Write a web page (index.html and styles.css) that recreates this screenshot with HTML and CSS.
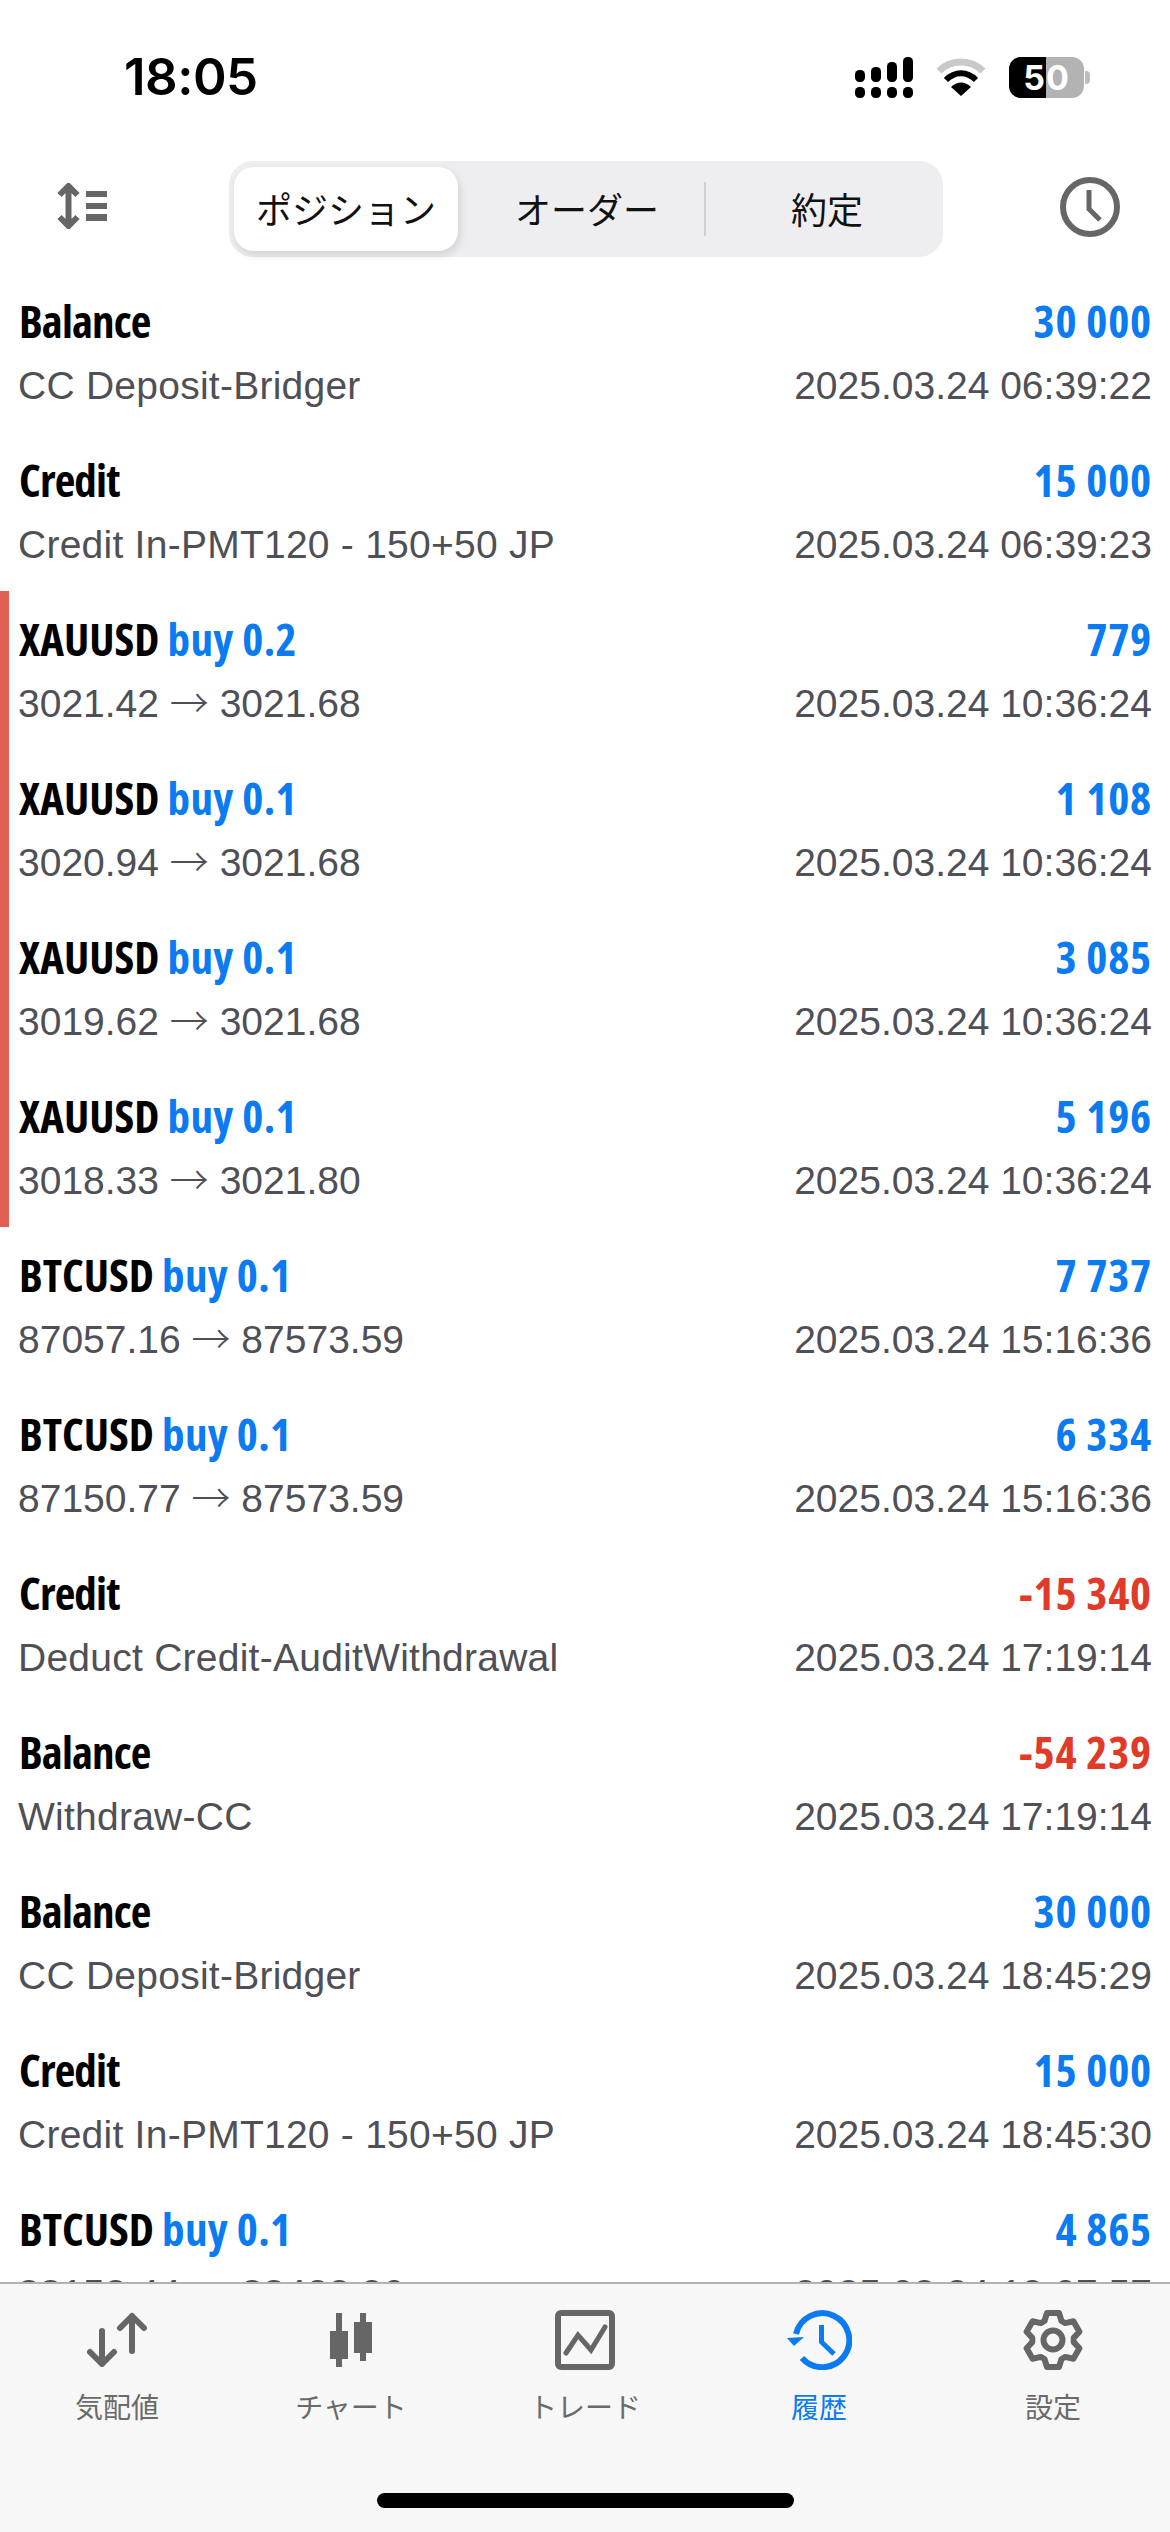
FILE: index.html
```html
<!DOCTYPE html>
<html lang="ja">

<head>
    <meta charset="UTF-8">
    <meta name="viewport" content="width=device-width, initial-scale=1.0">
    <title>履歴</title>
    <link rel="stylesheet" href="styles.css">
</head>

<body>
    <div class="status">
        <span class="time">18:05</span>
        <div class="status-icons">
            <svg width="58" height="41" viewBox="0 0 58 41" fill="#000">
                <rect x="0" y="13" width="10" height="12" rx="4.500"/><rect x="0" y="30" width="10" height="11" rx="4.500"/>
                <rect x="16" y="10" width="10" height="15" rx="4.500"/><rect x="16" y="30" width="10" height="11" rx="4.500"/>
                <rect x="32" y="5" width="10" height="20" rx="4.500"/><rect x="32" y="30" width="10" height="11" rx="4.500"/>
                <rect x="48" y="0" width="10" height="25" rx="4.500"/><rect x="48" y="30" width="10" height="11" rx="4.500"/>
            </svg>
            <svg class="wifi" width="50" height="38" viewBox="0 0 50 38" fill="none">
                <path d="M3 13 C15 1 35 1 47 13" stroke="#c9c9c9" stroke-width="7"/>
                <path d="M10 22 C19 13 31 13 40 22" stroke="#000" stroke-width="6"/>
                <path d="M15 29 C21 23 29 23 35 29 L25 38 Z" fill="#000"/>
            </svg>
            <div class="battery"><span class="batt-num">50</span><i class="batt-nub"></i></div>
        </div>
    </div>

    <div class="toolbar">
        <svg class="tool-sort" width="52" height="46" viewBox="0 0 52 46" fill="#666">
            <path d="M12.500 3 V43 M3.500 12 L12.500 3 L21.500 12 M3.500 34 L12.500 43 L21.500 34" fill="none" stroke="#666" stroke-width="6"/>
            <rect x="30" y="8" width="21" height="6"/><rect x="30" y="20" width="21" height="6"/><rect x="30" y="31" width="21" height="7"/>
        </svg>
        <div class="segment">
            <div class="seg seg-on">ポジション</div>
            <div class="seg seg-mid">オーダー</div>
            <div class="seg seg-last">約定</div>
        </div>
        <svg class="tool-clock" width="60" height="60" viewBox="0 0 60 60" fill="none" stroke="#666">
            <circle cx="30" cy="30" r="27" stroke-width="6"/>
            <path d="M29 13 V32 L40 43" stroke-width="5"/>
        </svg>
    </div>

    <div class="list" id="list"></div>

    <div class="tabbar">
        <div class="tabs">
            <div class="tab">
                <svg class="tab-icon" width="60" height="60" viewBox="0 0 60 60" fill="none" stroke="#666" stroke-width="6" stroke-linecap="round" stroke-linejoin="round">
                    <path d="M45 6 V41 M33 18 L45 6 L57 18"/>
                    <path d="M15 21 V54 M3 42 L15 54 L27 42"/>
                </svg>
                <span>気配値</span>
            </div>
            <div class="tab">
                <svg class="tab-icon" width="42" height="60" viewBox="0 -3 42 60" fill="#666">
                    <rect x="6" y="0" width="6" height="54"/><rect x="0" y="18" width="18" height="28"/>
                    <rect x="30" y="0" width="6" height="48"/><path fill-rule="evenodd" d="M24 9 H42 V40 H24 Z M30 14 V34 H36 V14 Z"/>
                </svg>
                <span>チャート</span>
            </div>
            <div class="tab">
                <svg class="tab-icon" width="60" height="60" viewBox="0 0 60 60" fill="none" stroke="#666">
                    <rect x="3" y="3" width="54" height="54" rx="3" stroke-width="6"/>
                    <path d="M11 43 L23 25 L36 40 L50 17" stroke-width="5" stroke-linecap="round"/>
                </svg>
                <span>トレード</span>
            </div>
            <div class="tab tab-on">
                <svg class="tab-icon" width="65" height="60" viewBox="0 0 65 60" fill="none" stroke="#0a7bf0">
                    <path d="M9 24 A27 27 0 1 1 15 48" stroke-width="6"/>
                    <path d="M34.500 15 V32 L47 44" stroke-width="5"/>
                    <path d="M0 28 L17 27 L7 36 Z" fill="#0a7bf0" stroke="none"/>
                </svg>
                <span>履歴</span>
            </div>
            <div class="tab">
                <svg class="tab-icon" width="60" height="60" viewBox="0 0 60 60" fill="none" stroke="#666" stroke-width="6" stroke-linejoin="round">
                    <path d="M24 3 H36 L38.500 11 L42.200 13.100 L50.400 11.300 L56.400 21.700 L50.700 27.900 V32.100 L56.400 38.300 L50.400 48.700 L42.200 46.900 L38.500 49 L36 57 H24 L21.500 49 L17.800 46.900 L9.600 48.700 L3.600 38.300 L9.300 32.100 V27.900 L3.600 21.700 L9.600 11.300 L17.800 13.100 L21.500 11 Z"/>
                    <circle cx="30" cy="30" r="9.500"/>
                </svg>
                <span>設定</span>
            </div>
        </div>
        <div class="home-bar"></div>
    </div>

    <script>
        var rows = [
            ["Balance", "", "30 000", "CC Deposit-Bridger", "2025.03.24 06:39:22"],
            ["Credit", "", "15 000", "Credit In-PMT120 - 150+50 JP", "2025.03.24 06:39:23"],
            ["XAUUSD", "buy 0.2", "779", "3021.42 → 3021.68", "2025.03.24 10:36:24", 1],
            ["XAUUSD", "buy 0.1", "1 108", "3020.94 → 3021.68", "2025.03.24 10:36:24", 1],
            ["XAUUSD", "buy 0.1", "3 085", "3019.62 → 3021.68", "2025.03.24 10:36:24", 1],
            ["XAUUSD", "buy 0.1", "5 196", "3018.33 → 3021.80", "2025.03.24 10:36:24", 1],
            ["BTCUSD", "buy 0.1", "7 737", "87057.16 → 87573.59", "2025.03.24 15:16:36"],
            ["BTCUSD", "buy 0.1", "6 334", "87150.77 → 87573.59", "2025.03.24 15:16:36"],
            ["Credit", "", "-15 340", "Deduct Credit-AuditWithdrawal", "2025.03.24 17:19:14"],
            ["Balance", "", "-54 239", "Withdraw-CC", "2025.03.24 17:19:14"],
            ["Balance", "", "30 000", "CC Deposit-Bridger", "2025.03.24 18:45:29"],
            ["Credit", "", "15 000", "Credit In-PMT120 - 150+50 JP", "2025.03.24 18:45:30"],
            ["BTCUSD", "buy 0.1", "4 865", "88153.44 → 88422.26", "2025.03.24 19:07:57"]
        ];
        var html = '';
        for (var i = 0; i < rows.length; i++) {
            var r = rows[i];
            html += '<div class="row' + (r[1] ? ' row-trade' : '') + (r[5] ? ' row-mark' : '') + '">';
            html += '<div class="line"><span class="name">' + r[0] + (r[1] ? ' <span class="side">' + r[1] + '</span>' : '') + '</span>';
            html += '<span class="amount' + (r[2][0] === '-' ? ' neg' : '') + '">' + r[2] + '</span></div>';
            html += '<div class="line sub"><span class="comment">' + r[3].replace('→', '<span class="arrow">→</span>') + '</span><span>' + r[4] + '</span></div></div>';
        }
        document.getElementById('list').innerHTML = html;
    </script>
</body>

</html>
```
FILE: styles.css
```css
* {
    box-sizing: border-box;
}

html,
body {
    margin: 0;
    padding: 0;
}

body {
    width: 1170px;
    height: 2532px;
    overflow: hidden;
    background: #fff;
    display: flex;
    flex-direction: column;
    font-family: "Liberation Sans", Arial, "Noto Sans CJK JP", sans-serif;
}

.status {
    height: 130px;
    flex: none;
    display: flex;
    justify-content: space-between;
    align-items: flex-start;
    padding: 47px 86px 0 124px;
}

.time {
    font-size: 51px;
    line-height: 60px;
    font-weight: 600;
    font-family: Inter, "Liberation Sans", sans-serif;
    letter-spacing: -.5px;
}

.status-icons {
    display: flex;
    align-items: flex-start;
    gap: 23px;
    padding-top: 10px;
}

.wifi {
    margin-top: 1px;
}

.battery {
    width: 75px;
    height: 41px;
    border-radius: 12px;
    background: linear-gradient(to right, #000 50%, #b3b3b3 50%);
    position: relative;
    color: #fff;
    text-align: center;
    font-family: Inter, sans-serif;
    font-size: 34px;
    line-height: 41px;
    font-weight: 700;
    letter-spacing: 1px;
}

.batt-nub {
    position: absolute;
    right: -6px;
    top: 14px;
    width: 5px;
    height: 13px;
    border-radius: 0 4px 4px 0;
    background: #bdbdbd;
}

.toolbar {
    height: 143px;
    flex: none;
    display: flex;
    align-items: flex-start;
    justify-content: space-between;
    padding: 31px 50px 0 56px;
}

.tool-sort {
    margin-top: 22px;
}

.tool-clock {
    margin-top: 16px;
}

.segment {
    width: 714px;
    height: 96px;
    background: #eeeef0;
    border-radius: 24px;
    padding: 6px 5px;
    display: flex;
    align-items: center;
    font-size: 36px;
    font-family: "Noto Sans CJK JP", sans-serif;
    color: #111;
    margin-left: 4px;
}

.seg {
    height: 84px;
    display: flex;
    align-items: center;
    justify-content: center;
    padding-bottom: 3px;
}

.seg-on {
    width: 224px;
    background: #fff;
    border-radius: 20px;
    box-shadow: 2px 4px 8px rgba(0, 0, 0, .12);
}

.seg-mid {
    width: 248px;
    position: relative;
    padding-left: 10px;
}

.seg-mid::after {
    content: "";
    position: absolute;
    right: 0;
    top: 15px;
    height: 54px;
    width: 2px;
    background: #d0d0d4;
}

.seg-last {
    width: 232px;
    padding-left: 10px;
}

.list {
    flex: 1;
    overflow: hidden;
}

.row {
    height: 159px;
    padding: 18px 18px 0 19px;
}

.row-mark {
    box-shadow: inset 9px 0 0 #e05f55;
}

.line {
    display: flex;
    justify-content: space-between;
    align-items: baseline;
}

.name,
.amount {
    font-family: "Open Sans", "Liberation Sans", sans-serif;
    font-stretch: 75%;
    font-weight: 700;
    font-size: 45px;
    line-height: 60px;
}

.name {
    color: #000;
    letter-spacing: -.85px;
}

.row-trade .name {
    letter-spacing: 0;
}

.side,
.amount {
    color: #0a7bf0;
}

.side {
    letter-spacing: .4px;
}

.amount {
    letter-spacing: .8px;
}

.amount.neg {
    color: #e23a28;
}

.sub {
    font-size: 39px;
    line-height: 42px;
    color: #4f5056;
    margin-top: 2px;
    padding-top: 12px;
}

.comment {
    letter-spacing: .25px;
    margin-left: -1px;
}

.row-trade .comment {
    letter-spacing: 0;
}

.arrow {
    font-family: "Noto Sans CJK JP", sans-serif;
    font-weight: 300;
    line-height: 0;
}

.tabbar {
    height: 250px;
    flex: none;
    background: #f7f7f7;
    border-top: 2px solid #b3b3b3;
    position: relative;
}

.tabs {
    display: flex;
    padding-top: 26px;
}

.tab {
    width: 234px;
    display: flex;
    flex-direction: column;
    align-items: center;
    color: #6a6a6a;
    font-size: 28px;
    line-height: 40px;
    font-family: "Noto Sans CJK JP", sans-serif;
}

.tab span {
    margin-top: 16px;
}

.tab-icon {
    display: block;
}

.tab-on {
    color: #0a7bf0;
}

.home-bar {
    position: absolute;
    left: 377px;
    top: 209px;
    width: 417px;
    height: 15px;
    border-radius: 8px;
    background: #000;
}
```
